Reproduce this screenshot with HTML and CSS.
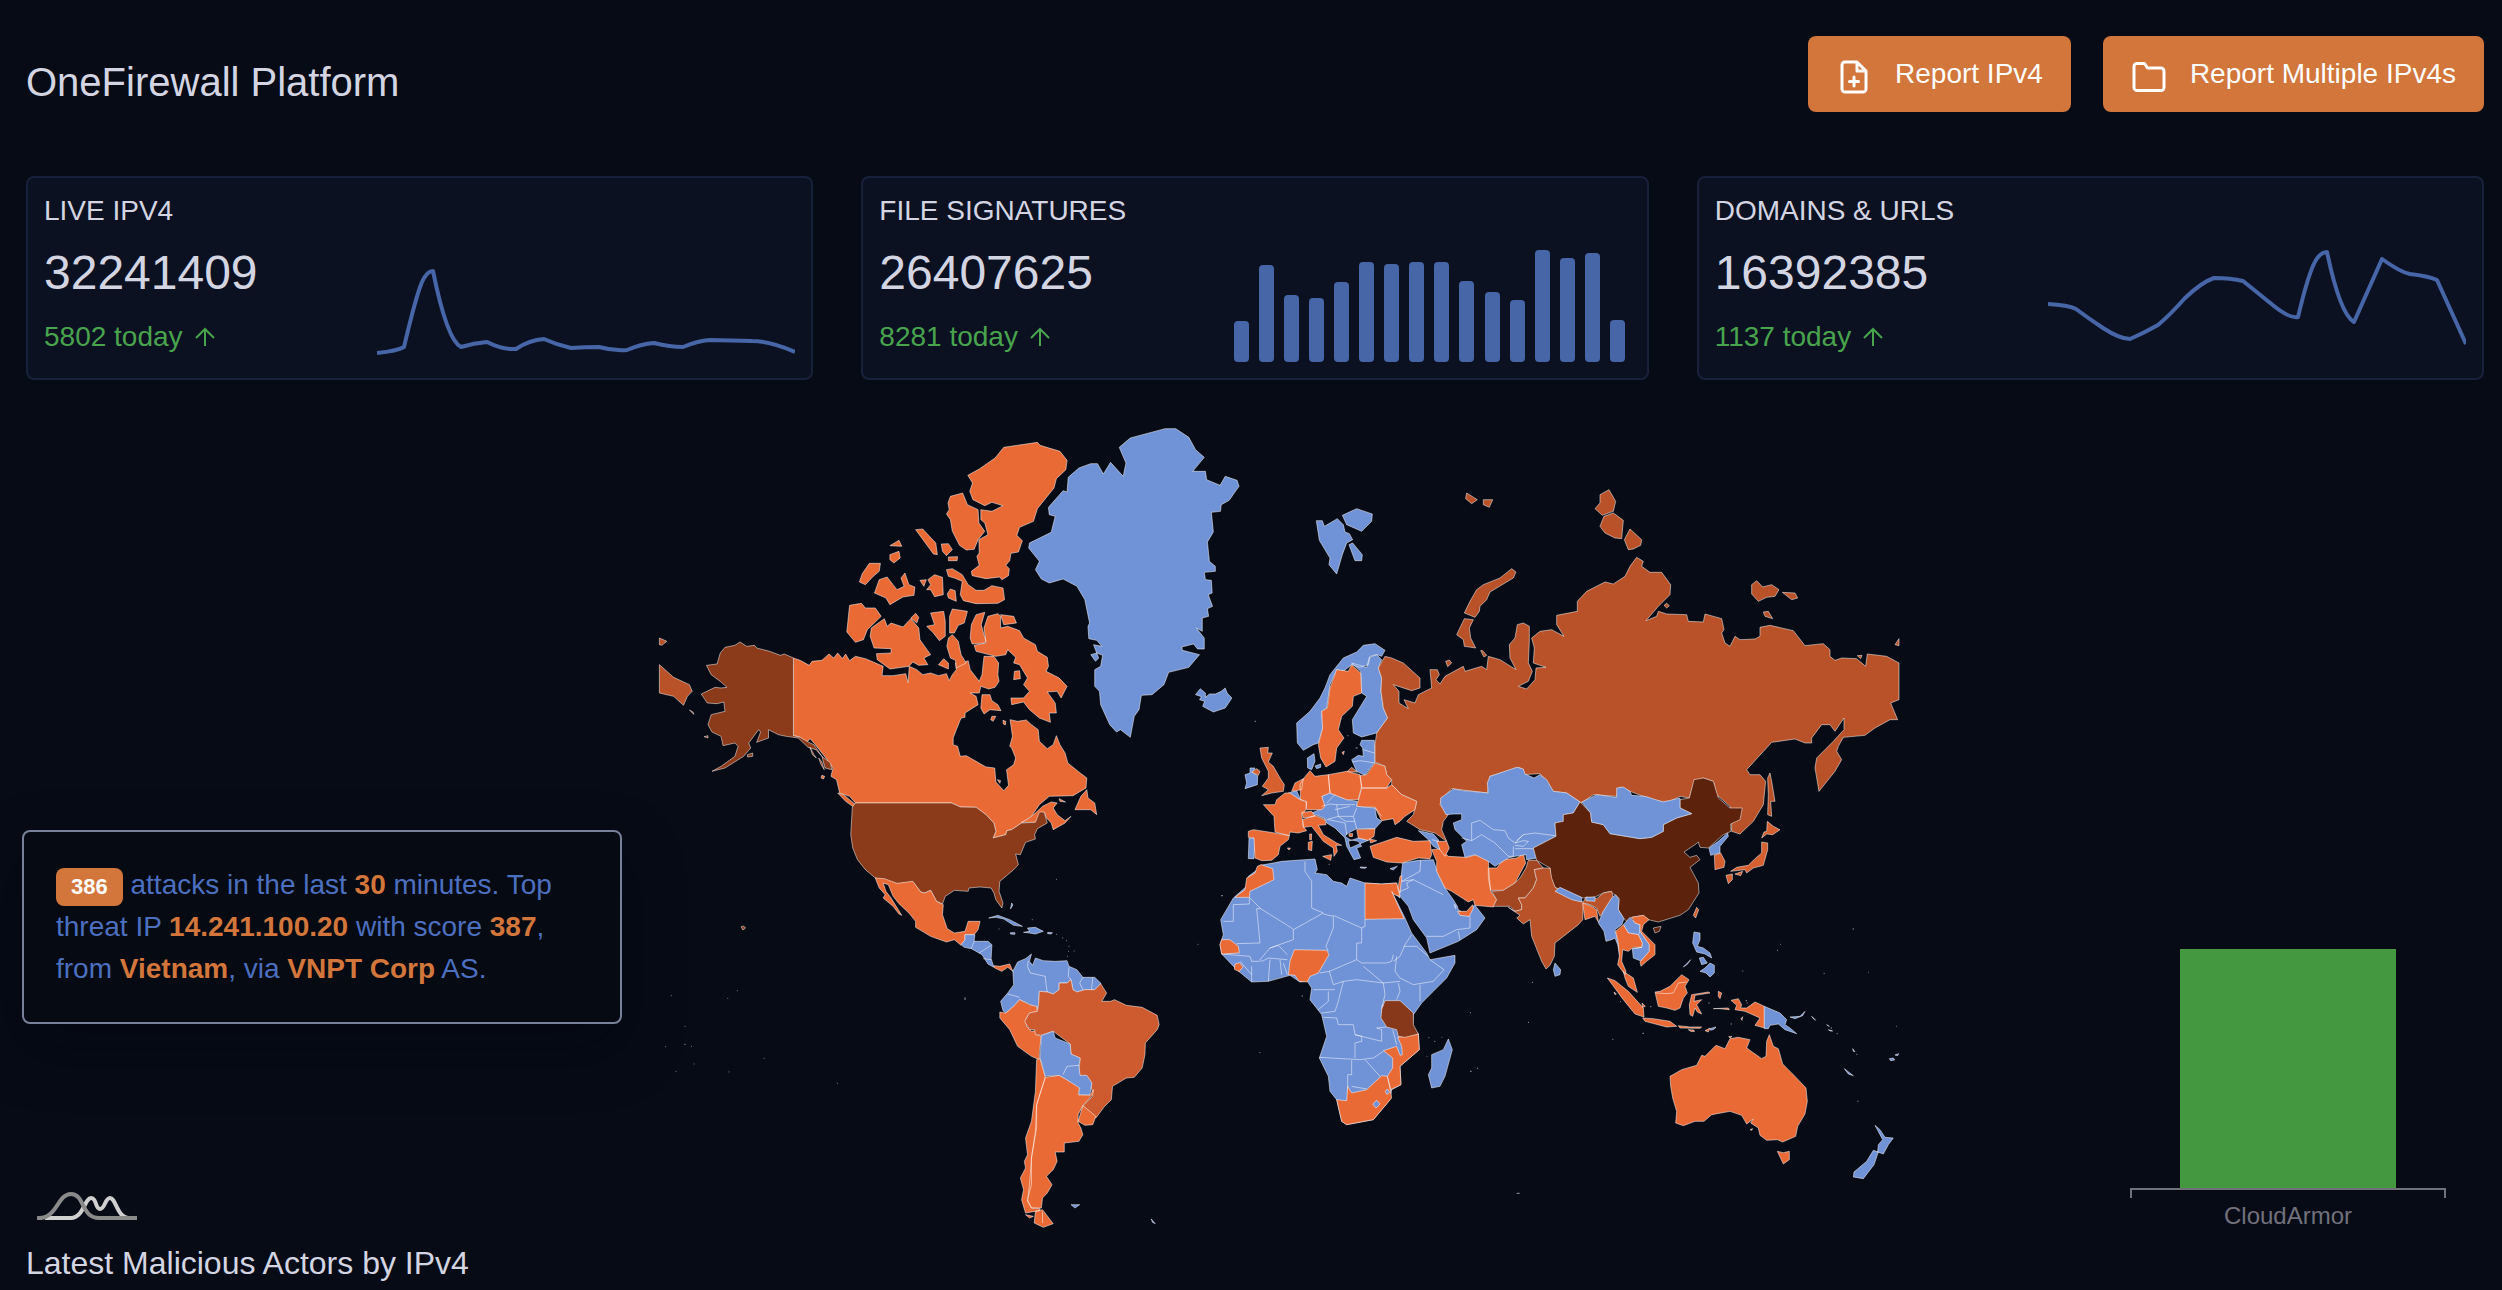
FILE: index.html
```html
<!DOCTYPE html>
<html lang="en">
<head>
<meta charset="utf-8">
<meta name="viewport" content="width=device-width, initial-scale=1">
<title>OneFirewall Platform</title>
<link rel="stylesheet" href="styles.css">
</head>
<body>
<div class="page">
  <header class="header">
    <h1 class="title">OneFirewall Platform</h1>
    <div class="actions">
      <button class="btn" type="button">
        <svg class="btn-icon" viewBox="0 0 24 24" aria-hidden="true"><path d="M14 2H6a2 2 0 0 0-2 2v16a2 2 0 0 0 2 2h12a2 2 0 0 0 2-2V8zM14 2v6h6M12 18v-6M9 15h6"/></svg>
        <span>Report IPv4</span>
      </button>
      <button class="btn" type="button">
        <svg class="btn-icon" viewBox="0 0 24 24" aria-hidden="true"><path d="M22 19a2 2 0 0 1-2 2H4a2 2 0 0 1-2-2V5a2 2 0 0 1 2-2h5l2 3h9a2 2 0 0 1 2 2z"/></svg>
        <span>Report Multiple IPv4s</span>
      </button>
    </div>
  </header>

  <section class="cards">
    <article class="card">
      <div class="card-text">
        <h2 class="card-title">LIVE IPV4</h2>
        <p class="card-value">32241409</p>
        <p class="card-today">5802 today <svg class="arrow" viewBox="0 0 24 24" aria-hidden="true"><path d="M12 21V4M3 13l9-9 9 9"/></svg></p>
      </div>
      <svg class="spark" viewBox="0 0 418 114" aria-hidden="true"><path d="M0 105Q20 103 27 99Q39 48 45 34Q50 23 56 23Q70 92 84 99Q97 95 110 94Q126 102 139 101Q152 92 167 91Q180 97 194 100Q208 99 222 99Q236 103 250 102Q264 96 277 95Q293 99 306 99Q320 93 333 92L375 93Q393 93 418 104"/></svg>
    </article>
    <article class="card">
      <div class="card-text">
        <h2 class="card-title">FILE SIGNATURES</h2>
        <p class="card-value">26407625</p>
        <p class="card-today">8281 today <svg class="arrow" viewBox="0 0 24 24" aria-hidden="true"><path d="M12 21V4M3 13l9-9 9 9"/></svg></p>
      </div>
      <svg class="spark bars" viewBox="0 0 418 114" aria-hidden="true">
        <rect x="21" y="73" width="15" height="41" rx="4"/><rect x="46" y="17" width="15" height="97" rx="4"/><rect x="71" y="47" width="15" height="67" rx="4"/><rect x="96" y="50" width="15" height="64" rx="4"/><rect x="121" y="34" width="15" height="80" rx="4"/><rect x="146" y="14" width="15" height="100" rx="4"/><rect x="171" y="16" width="15" height="98" rx="4"/><rect x="196" y="14" width="15" height="100" rx="4"/><rect x="221" y="14" width="15" height="100" rx="4"/><rect x="246" y="33" width="15" height="81" rx="4"/><rect x="272" y="44" width="15" height="70" rx="4"/><rect x="297" y="52" width="15" height="62" rx="4"/><rect x="322" y="2" width="15" height="112" rx="4"/><rect x="347" y="10" width="15" height="104" rx="4"/><rect x="372" y="5" width="15" height="109" rx="4"/><rect x="397" y="72" width="15" height="42" rx="4"/>
      </svg>
    </article>
    <article class="card">
      <div class="card-text">
        <h2 class="card-title">DOMAINS &amp; URLS</h2>
        <p class="card-value">16392385</p>
        <p class="card-today">1137 today <svg class="arrow" viewBox="0 0 24 24" aria-hidden="true"><path d="M12 21V4M3 13l9-9 9 9"/></svg></p>
      </div>
      <svg class="spark" viewBox="0 0 418 114" aria-hidden="true"><path d="M0 56Q20 57 28 61Q40 70 55 80Q72 91 82 91Q96 85 110 77Q122 67 137 50Q154 34 166 30Q183 30 195 33L221 54Q241 71 250 69Q261 23 268 12Q273 4 279 4Q292 66 306 74L334 11Q352 24 362 26Q380 28 389 32L418 96"/></svg>
    </article>
  </section>

  <section class="stage">
    <div class="side">
      <p class="notice"><span class="badge">386</span> attacks in the last <strong>30</strong> minutes. Top threat IP <strong>14.241.100.20</strong> with score <strong>387</strong>, from <strong>Vietnam</strong>, via <strong>VNPT Corp</strong> AS.</p>
      <a class="logo" href="#" aria-label="Chart library">
        <svg viewBox="0 0 100 28" aria-hidden="true"><path class="logo-light" d="M8 26H34C46 26 48 6 54 6S58 17 63 17S68 6 73 6C79 6 80 26 92 26"/><path class="logo-dark" d="M0 26C20 28 20 2 34 2S44 26 62 26H100"/></svg>
      </a>
    </div>

    <svg class="map" viewBox="654 410 1444 836" role="img" aria-label="World map of attacks by country">
      <!-- North America and Greenland -->
      <g transform="translate(640 410) scale(.39541 .33333)">
        <path class="o" d="M388,750 405,757 428,772 435,760 460,757 478,738 490,750 500,735 512,752 520,738 530,758 545,745 570,752 590,762 615,775 612,803 640,803 672,797 678,824 681,775 700,785 715,800 735,795 755,803 775,797 782,818 790,800 800,785 798,765 808,757 815,765 830,758 835,785 858,820 865,800 870,745 895,745 907,765 905,800 908,820 898,838 882,843 862,835 858,855 835,855 850,865 855,890 835,905 822,915 822,928 812,930 800,965 792,990 792,1010 803,1015 810,1045 825,1043 850,1060 875,1077 897,1080 900,1122 920,1148 932,1132 927,1085 945,1070 950,1050 940,1020 935,1015 942,985 936,935 955,940 977,936 990,950 1007,965 1010,1000 1030,1022 1045,1010 1053,983 1062,1010 1075,1035 1082,1065 1110,1092 1130,1110 1128,1140 1095,1163 1035,1165 1010,1190 990,1225 965,1245 940,1265 928,1268 925,1280 893,1290 900,1270 895,1245 875,1220 850,1198 810,1197 788,1185 545,1185 530,1165 505,1155 497,1115 483,1105 488,1080 470,1050 440,1005 430,992 420,1005 405,987 388,983Z"/>
        <path class="o" d="M965,1243 985,1230 1000,1215 1018,1195 1040,1182 1055,1185 1045,1200 1055,1220 1075,1238 1090,1225 1075,1245 1045,1265 1040,1245 1028,1230 1022,1212 1000,1243ZM1130,1145 1133,1170 1150,1185 1155,1220 1140,1205 1100,1205 1115,1165ZM500,1155 515,1160 545,1190 540,1197 520,1180ZM460,1102 467,1105 464,1113 458,1110ZM1060,1172 1076,1182 1062,1180Z"/>
        <path class="o" d="M920,118 1005,103 1012,112 1062,130 1080,157 1077,185 1053,212 1047,240 1005,302 995,340 960,358 953,382 967,398 957,432 938,436 935,458 925,472 934,482 932,503 915,515 910,507 875,512 840,503 838,490 858,472 852,445 858,435 857,395 880,380 872,345 862,335 862,305 890,310 918,293 890,283 872,293 842,275 834,250 841,225 829,202 858,183 898,150ZM785,265 816,255 828,290 855,305 857,345 872,370 855,395 845,424 825,426 808,412 790,370 785,335 775,318 782,305 779,285ZM697,365 715,363 748,405 752,440 742,438 725,410ZM762,408 780,407 790,425 775,443 765,430ZM780,447 803,446 802,458 780,458ZM632,413 655,397 662,415ZM632,440 655,430 658,450 642,465 632,455ZM580,466 608,466 605,490 590,505 570,530 555,522 562,497ZM605,515 625,507 640,530 650,545 668,535 660,510 670,495 680,530 695,537 693,562 665,567 632,590 622,570 593,555ZM728,515 745,500 765,508 767,560 745,566 735,545 725,545 735,530ZM708,517 724,515 718,535ZM785,543 797,548 800,580 780,570 777,558ZM775,485 790,482 815,500 830,530 850,547 870,547 890,533 918,540 922,575 905,586 850,587 818,578 810,560 815,520 795,510 780,505Z"/>
        <path class="o" d="M530,592 560,586 570,600 595,600 610,625 575,665 565,695 545,703 523,672ZM618,632 625,655 635,645 665,657 685,632 705,660 708,695 735,740 718,750 728,770 705,772 690,762 680,775 632,783 600,755 598,737 635,735 635,722 592,720 582,685 585,660ZM685,630 697,616 705,628 700,645ZM735,615 768,610 772,640 772,685 757,698 742,675 725,655 745,650ZM790,603 828,610 820,645 805,652 795,675 783,675 783,625ZM780,690 790,680 805,700 812,740 825,765 800,780 798,757 785,750 776,715ZM755,770 768,752 780,765 780,783ZM850,620 872,613 863,650 870,680 875,700 870,705 840,708 835,690 838,650ZM880,625 905,617 912,625 912,660 930,655 960,668 970,690 1000,710 1005,730 1030,748 1033,775 1027,790 1060,810 1080,835 1065,870 1055,850 1030,852 1050,885 1053,915 1035,915 1038,943 1010,930 985,905 970,882 940,890 938,870 970,870 985,850 970,830 980,810 960,770 945,765 950,748 930,725 925,740 900,745 850,730 845,712 875,705 870,660ZM912,620 945,625 952,645 920,650ZM865,860 885,860 890,878 905,890 913,908 885,905 870,918 862,900ZM947,790 960,788 962,812 945,815ZM890,925 900,925 893,940 887,935ZM918,937 925,940 924,951 919,948ZM904,1115 912,1118 910,1126Z"/>
        <path class="us" d="M388,750 365,738 355,742 328,730 295,720 290,712 270,715 253,702 240,712 215,718 203,735 195,768 168,772 180,800 205,822 220,838 205,840 190,838 155,858 170,885 195,887 212,882 215,910 180,920 172,950 182,972 205,985 210,1013 240,1005 248,1015 240,1045 205,1075 182,1090 215,1080 262,1045 280,1020 275,1005 300,965 305,972 295,1003 325,990 325,965 350,980 370,985 400,990 425,1018 445,1025 460,1045 468,1080 485,1085 482,1065 460,1045 440,1010 430,1005 405,988 388,983ZM272,1040 285,1035 285,1045 272,1047ZM162,986 172,983 172,990ZM452,1050 460,1062 466,1085 458,1070ZM430,1018 440,1040 446,1050 436,1040Z"/>
        <path class="us" d="M545,1185 788,1185 810,1197 850,1198 875,1220 895,1245 900,1270 893,1290 925,1280 928,1268 940,1265 965,1245 1000,1243 1010,1212 1022,1212 1030,1245 1005,1262 998,1280 1000,1293 975,1303 962,1340 950,1338 957,1370 945,1385 910,1420 908,1450 918,1485 915,1500 900,1475 895,1455 888,1440 860,1437 832,1440 830,1450 795,1447 772,1465 765,1488 750,1480 735,1447 720,1455 710,1452 690,1422 650,1428 595,1410 570,1385 550,1355 538,1320 533,1280 537,1197Z"/>
        <path class="ru" d="M49,770 85,808 125,830 132,850 120,865 110,892 85,865 49,855ZM49,690 68,700 55,712 49,710ZM125,906 134,912 136,919Z"/>
        <path class="b" d="M1212,118 1240,90 1328,62 1355,62 1388,88 1405,125 1427,148 1398,190 1430,190 1433,215 1467,232 1480,205 1510,217 1515,235 1490,277 1470,290 1468,310 1445,313 1450,372 1435,402 1440,460 1455,475 1455,490 1427,493 1430,515 1445,517 1447,555 1437,560 1448,595 1435,602 1438,625 1422,630 1422,670 1407,660 1427,690 1427,723 1410,723 1400,708 1370,717 1372,727 1415,740 1388,778 1337,793 1325,830 1295,860 1268,862 1262,905 1250,925 1240,988 1215,965 1205,972 1188,950 1165,890 1162,850 1150,835 1150,785 1165,775 1170,742 1155,735 1147,710 1168,715 1155,697 1135,692 1133,655 1137,645 1125,575 1105,535 1070,513 1035,525 1015,513 1000,485 1010,460 983,420 985,405 1040,373 1050,325 1035,320 1033,298 1070,248 1080,252 1083,208 1110,180 1140,167 1157,167 1172,198 1190,163 1222,205 1229,165ZM1405,860 1417,842 1430,855 1430,868 1440,858 1455,858 1470,850 1480,840 1485,855 1497,870 1480,900 1450,912 1423,895 1428,880 1415,875 1420,866ZM1140,740 1155,735 1160,750 1152,760Z"/>
      </g>
      <!-- Central and South America -->
      <g transform="translate(640 840) scale(.39541 .33333)">
        <path class="o" d="M595,120 618,122 650,136 690,130 710,162 720,165 735,157 750,190 767,200 765,230 777,272 795,285 822,280 830,250 860,250 855,275 845,290 822,290 822,305 812,322 795,305 775,312 735,295 697,268 697,250 680,225 655,197 640,175 628,140 615,135 622,160 635,180 648,205 662,232 655,228 640,205 615,180 620,170 605,150Z"/>
        <path class="b" d="M812,320 822,305 822,290 847,290 845,310 880,310 890,320 888,362 895,388 880,378 865,350 838,332 820,328ZM882,240 905,232 935,245 967,265 945,262 920,243 900,238ZM980,270 1000,268 1020,280 1000,288 985,285 970,283 985,280ZM937,284 948,284 948,289 937,288ZM1031,283 1043,284 1040,288 1031,287ZM1090,1100 1112,1100 1100,1110ZM1293,1143 1303,1157 1296,1153ZM940,195 943,201 937,213Z"/>
        <path class="b" d="M943,400 955,372 975,362 990,348 985,370 993,382 1000,360 1020,368 1050,370 1080,368 1085,385 1105,395 1120,418 1150,418 1165,435 1165,445 1150,455 1125,455 1105,462 1095,455 1090,425 1080,435 1060,435 1060,455 1045,468 1030,462 1010,460 1008,500 1003,520 985,498 960,485 945,505 925,525 918,518 912,490 930,465 945,440Z"/>
        <path class="line" d="M982,368 980,385 987,405 1025,415 1027,440 1030,462M1085,388 1083,415 1090,425M1120,418 1112,435 1120,455M1145,418 1142,455M930,468 960,478M845,310 838,332M888,322 858,345M868,362 888,365"/>
        <path class="o" d="M895,383 910,385 935,378 943,400 930,388 915,400 897,390ZM910,522 925,525 945,505 960,485 985,500 1003,505 1005,520 985,525 975,545 978,565 990,580 1000,578 1003,590 1015,595 1010,640 1010,665 990,655 955,625 935,575 910,540Z"/>
        <path class="br" d="M1008,500 1010,460 1030,462 1045,468 1060,455 1060,435 1080,435 1090,425 1095,455 1105,462 1125,455 1150,455 1165,437 1180,465 1168,490 1190,490 1200,485 1230,502 1270,508 1308,532 1313,560 1308,575 1278,615 1277,650 1270,690 1250,718 1230,720 1195,745 1192,785 1175,805 1153,840 1120,803 1145,775 1140,735 1110,710 1113,660 1090,650 1088,618 1045,580 1015,592 1000,590 998,575 985,575 973,550 985,525 1005,520Z"/>
        <path class="o" d="M1025,718 1060,712 1075,722 1112,745 1108,770 1138,772 1147,755 1145,770 1120,803 1108,830 1108,855 1115,870 1120,890 1110,910 1073,915 1073,942 1050,942 1055,970 1045,995 1028,1015 1042,1040 1030,1065 1018,1080 1015,1110 990,1110 980,1090 985,1040 990,960 1000,880 1003,800ZM1120,803 1153,835 1145,860 1125,862 1108,850ZM1003,665 1012,662 1025,718 1003,800 1003,870 990,960 990,1040 980,1085 990,1110 1012,1112 1010,1118 975,1125 965,1085 970,1055 962,1020 975,990 972,970 980,950 975,900 990,850 1000,760ZM1000,1120 1018,1115 1045,1157 1020,1168 997,1155ZM975,1130 995,1135 985,1140Z"/>
        <path class="b" d="M1015,592 1045,580 1050,600 1088,618 1090,648 1113,660 1110,685 1113,712 1130,712 1143,735 1138,770 1110,770 1112,750 1075,722 1060,712 1025,715 1012,660Z"/>
        <path class="line" d="M1070,710 1080,685 1110,682M1018,1120V1155"/>
        <path class="us" d="M256,266 262,264 267,270 260,276Z"/>
        <path class="dot" d="M1052,124h2M991,245h2M907,273h2M1052,289h2M1068,300h2M1078,308h2M1084,325h2M1083,340h2M1097,339h2M1080,355h2M822,478v8M245,458h2M221,481h2M113,565h2M112,619h3M129,625h2M136,678h2M90,700h2M313,661h2M224,702h2M498,736h2M1410,319h2M1470,173h3M78,473h2M64,626h2"/>
      </g>
      <!-- Africa and the Middle East -->
      <g transform="translate(1200 830) scale(.33333)">
        <path class="b" d="M180,112 220,105 245,100 345,93 352,125 345,135 380,140 400,160 425,165 440,175 450,150 495,165 545,168 590,165 600,210 575,190 615,270 635,315 680,375 690,395 765,382 765,405 740,450 700,490 665,525 640,560 638,600 655,618 658,665 600,715 603,770 575,785 570,815 520,875 440,890 425,880 410,815 390,790 385,745 358,690 380,625 365,560 330,515 335,480 322,460 300,462 270,442 205,460 155,462 110,425 65,378 60,350 70,320 62,275 100,210 140,175 145,145 172,125ZM745,633 757,665 735,745 720,775 695,780 685,740 695,720 695,680 730,665Z"/>
        <path class="b" d="M608,105 655,97 700,95 715,140 735,180 760,215 772,235 775,245 805,265 810,240 825,232 855,270 830,305 775,340 690,375 680,330 640,275 625,235 600,205 598,190ZM480,117 500,118 495,121 482,120ZM570,122 592,115 580,126Z"/>
        <path class="line" d="M148,208 182,242 275,300 280,305 370,255 335,240 335,160 315,130 315,100M70,280 100,280 100,230 148,228V210M182,242H170L180,345 110,347M280,305 280,335 210,360 180,395 187,400 205,390 262,395M210,360 235,352 262,380M370,258 400,265 400,300 378,355 385,370M400,262 485,300 485,345 470,345 470,395 400,425 388,430 360,435M495,274V295L485,300M470,395 485,405 500,405 560,405 575,400 580,380M580,400 600,385 615,350 635,320M612,355 650,355 685,385M690,395 732,425 700,460 640,470 600,450 585,430 590,385M490,415 550,465 600,460M388,430 400,470 430,460 470,455 550,465 555,500 545,540 545,570M660,470V520M595,465 600,490 590,515M430,460 415,520 405,550 365,555M340,485H405M385,490V520L355,545M370,568 410,570 415,590 460,590 465,620 485,625V640L465,645V690M358,688 480,695 520,690 550,670M465,620 545,640 545,605 530,600 560,597M455,697V740H443V815M495,695 540,745M578,605 590,650M155,462V415M205,460 210,395M245,440 240,395M262,440 250,405M65,378 150,385 155,400 180,400M120,400 155,440M455,775 500,783M680,325 730,325 770,305 810,300V265M605,160 640,155 730,200M662,97 660,130 605,160M600,190 625,180 620,165 640,155M775,310 780,335M543,535 555,530"/>
        <path class="o" d="M172,115 183,110 218,122 222,155 150,190 148,208 105,208 135,185 140,150 165,135ZM495,165 545,168 590,165 600,205 583,200 575,190 612,272 495,274ZM65,335 90,335 115,355 118,375 65,378 60,350ZM105,408 118,404 129,416 118,431 103,424ZM283,365 380,367 387,380 355,435 330,445 322,462 297,460 285,442 265,440 270,400ZM593,628 655,618 658,665 600,715 603,770 572,785 562,745 578,720 578,690 550,668 590,655 600,682 607,680 605,655ZM410,815 440,818 443,775 455,795 500,785 545,743 562,745 570,780 575,810 520,875 440,890 425,880ZM773,250 800,250 818,230 820,240 808,265 780,262ZM600,145 606,143 600,195 594,180Z"/>
        <path class="o" d="M695,65 720,62 745,85 800,88 830,80 865,95 868,150 872,190 890,215 880,237 825,232 820,215 805,222 755,190 735,180 710,130 710,100ZM865,120 890,120 910,95 950,90 970,78 977,105 945,165 910,187 872,187 865,150Z"/>
        <path class="tz" d="M555,518 600,518 640,555 640,590 655,618 615,628 595,625 590,605 560,597 543,570 545,545Z"/>
        <path class="b" d="M518,828 530,817 540,828 528,840ZM556,790 562,783 569,793 560,799ZM762,230 768,232 767,242Z"/>
        <path class="dot" d="M64,203h4M305,504h4M178,674h3M685,629h3M703,640h3M725,628h2M810,730h5M831,721h3M810,554h3M985,583h2M997,463h2M680,685h2M386,109h3"/>
      </g>
      <!-- Europe and Russia -->
      <g transform="translate(1200 410) scale(.33333)">
        <path class="b" d="M349,338 367,338 373,355 412,332 430,350 435,372 448,377 458,395 440,405 427,440 410,498 387,470 390,450 358,397ZM427,322 470,302 517,318 515,340 485,370 440,350ZM447,410 458,405 487,440 485,458 465,458Z"/>
        <path class="ru" d="M800,255 832,275 815,287 797,272ZM850,275 878,275 868,298 850,290ZM793,615 810,580 830,545 850,530 900,510 935,482 948,492 940,510 870,552 860,575 840,595 838,610 825,628ZM793,632 820,635 808,660 812,690 827,720 793,715 790,695 770,680Z"/>
        <path class="b" d="M290,945 330,910 360,870 375,840 390,800 430,750 470,732 490,712 525,707 555,727 545,745 530,740 510,745 505,770 480,778 455,770 430,790 410,785 390,830 380,900 365,910 368,960 355,1005 340,1010 310,1027 292,1005ZM455,765 500,778 508,748 530,740 545,755 535,780 545,810 543,850 550,900 563,930 530,975 485,987 460,975 457,935 500,865 485,855 482,790ZM485,997 523,997 525,1062 495,1102 470,1090 455,1055 475,1042 490,1045 488,1020 480,1010ZM322,1050 342,1037 345,1060 335,1085 323,1080ZM345,1074 362,1068 362,1078 350,1082ZM150,1080 165,1080 158,1095 173,1103 172,1130 135,1142 140,1125 135,1100 150,1095Z"/>
        <path class="ru" d="M555,745 575,750 610,765 660,810 660,840 635,848 580,830 597,850 597,885 625,902 612,875 645,885 655,860 695,840 690,785 712,785 718,800 708,815 720,828 735,805 790,775 795,790 845,775 860,785 865,745 900,755 948,785 930,750 928,710 945,690 952,650 970,645 988,655 988,700 985,765 997,790 985,820 955,835 980,843 1005,815 1008,780 1038,778 1000,765 1003,720 995,690 1020,670 1055,665 1092,685 1070,650 1070,622 1132,610 1132,580 1160,550 1215,522 1240,528 1275,505 1290,475 1310,448 1330,460 1325,475 1350,493 1385,493 1412,530 1410,560 1375,595 1338,638 1370,625 1375,610 1400,618 1460,620 1465,640 1510,642 1515,618 1565,632 1572,665 1565,675 1575,705 1590,715 1605,685 1620,695 1665,693 1680,685 1680,658 1710,652 1780,668 1815,713 1870,707 1890,725 1890,745 1905,757 1925,750 1970,752 1997,775 2002,738 2060,745 2097,765 2097,875 2072,885 2093,935 2070,935 2025,960 1995,982 1930,988 1915,1015 1910,1030 1925,1055 1905,1090 1857,1150 1845,1080 1850,1050 1900,1000 1932,965 1932,930 1905,970 1890,950 1865,950 1835,990 1835,1005 1815,1005 1785,993 1715,1003 1640,1085 1650,1100 1680,1100 1697,1120 1690,1190 1660,1240 1620,1278 1595,1270 1595,1245 1590,1195 1550,1160 1540,1120 1510,1110 1480,1130 1468,1170 1440,1165 1410,1180 1370,1180 1330,1165 1290,1150 1260,1137 1250,1165 1180,1160 1145,1185 1100,1155 1060,1150 1020,1097 970,1100 960,1078 870,1105 862,1155 780,1145 755,1142 725,1175 720,1190 745,1220 730,1240 725,1265 740,1300 705,1275 660,1265 620,1240 640,1220 650,1180 605,1160 575,1130 575,1115 560,1100 555,1075 525,1062 525,1010 530,975 563,930 550,900 543,850 545,810 535,780ZM440,1092 455,1078 472,1092Z"/>
        <path class="o" d="M455,770 482,795 485,855 460,865 457,895 425,925 415,965 432,990 410,1020 405,1060 378,1077 362,1050 355,1010 368,960 365,910 382,900 390,840 410,785 445,790ZM426,1033 433,1030 430,1040Z"/>
        <path class="uk" d="M180,1020 205,1018 203,1035 217,1035 205,1062 220,1075 240,1110 253,1130 250,1150 215,1155 185,1163 205,1145 187,1135 205,1110 205,1090 185,1050ZM155,1092 170,1082 180,1090 175,1102Z"/>
        <path class="b" d="M365,1165 388,1155 440,1175 472,1180 470,1195 525,1200 530,1230 545,1240 525,1262 470,1262 445,1275 435,1285 450,1295 475,1300 485,1315 470,1320 482,1350 462,1355 440,1315 435,1290 405,1260 380,1245 375,1232 335,1215 370,1200ZM147,1290 165,1290 162,1352 145,1352ZM265,1155 290,1148 302,1175 285,1170ZM655,1268 700,1278 715,1295 720,1325 700,1315 685,1295ZM505,1297 475,1290 445,1300 450,1320Z"/>
        <path class="o" d="M480,1103 500,1100 525,1065 555,1075 560,1100 575,1115 560,1140 485,1140ZM485,1140 560,1140 575,1130 605,1160 650,1180 645,1205 615,1225 600,1240 585,1250 580,1232 545,1238 525,1198 470,1195ZM385,1100 440,1090 480,1100 485,1135 475,1175 440,1175 390,1155ZM330,1088 345,1105 385,1100 390,1155 365,1165 375,1195 365,1205 320,1205 318,1180 302,1175 300,1130 310,1112ZM275,1150 285,1125 310,1112 305,1145ZM190,1190 225,1190 230,1175 255,1155 270,1155 300,1175 320,1182 318,1205 305,1220 310,1255 320,1268 295,1275 270,1272 268,1283 225,1272 222,1225ZM305,1213 335,1210 345,1225 310,1230ZM145,1270 160,1265 225,1275 268,1283 265,1295 240,1315 235,1340 215,1357 185,1358 165,1350 162,1290 145,1288ZM308,1235 345,1222 375,1235 378,1250 355,1252 370,1280 410,1305 425,1312 408,1312 412,1330 402,1345 400,1320 370,1300 335,1255 310,1258ZM368,1345 395,1340 392,1357ZM325,1303 337,1300 335,1328 325,1325ZM329,1278 335,1278 334,1296 329,1295ZM262,1320 271,1320 267,1326Z"/>
        <path class="o" d="M470,1265 525,1262 522,1285 505,1297 475,1290ZM447,1277 458,1277 457,1286 447,1285ZM510,1315 540,1305 590,1288 640,1300 690,1298 695,1340 690,1352 655,1350 605,1365 560,1362 520,1348ZM508,1292 530,1298 512,1305ZM710,1300 740,1300 748,1320 735,1345 720,1325Z"/>
        <path class="line" d="M490,1025 523,1035M457,1062 480,1058 525,1065M365,1195 390,1188 410,1190 465,1190M405,1160 380,1185M410,1190 415,1225 380,1235M415,1225 460,1225 470,1200M460,1225 470,1262M385,1235 435,1245 440,1280M415,1225 437,1240 465,1240M405,1205 450,1195M525,1198 545,1225M695,1295 715,1300"/>
        <path class="dot" d="M164,940h4M442,983h3M467,1020h6"/>
      </g>
      <!-- Central and East Asia, Arctic islands -->
      <g transform="translate(1400 470) scale(.33333)">
        <path class="ru" d="M600,80 627,65 647,100 640,130 607,142 585,122 600,105ZM600,175 612,145 640,135 670,157 665,212 645,210 615,195ZM690,183 725,215 722,232 700,243 685,245 673,215ZM1055,350 1070,338 1088,357 1115,350 1137,365 1125,385 1100,388 1075,400 1055,378ZM1147,373 1185,375 1193,390 1175,395ZM1090,432 1105,430 1118,452 1095,445ZM1497,512 1497,533 1485,530ZM1110,915 1115,940 1125,1000 1112,1000 1115,1045 1103,1040 1105,980 1103,930ZM792,412 800,406 808,413 800,420ZM137,580 148,576 155,585 143,596ZM242,548 247,547 260,562 252,567ZM1372,563 1386,562 1382,572Z"/>
        <path class="b" d="M122,990 160,963 190,968 265,975 262,945 270,925 350,898 370,903 375,918 402,930 420,920 440,935 460,970 500,975 540,1002 520,1035 490,1040 490,1060 465,1065 468,1105 400,1140 412,1170 380,1175 378,1160 345,1165 325,1170 285,1195 265,1180 225,1160 195,1168 185,1130 200,1120 165,1085 160,1065 185,1055 185,1038 160,1038 138,1040 122,1010Z"/>
        <path class="line" d="M215,1118V1065L240,1057 280,1085 315,1088 325,1110 345,1125 370,1100 405,1095 465,1103M185,1110 215,1118 245,1100 285,1125 325,1165 340,1165 340,1135M345,1125 370,1118 385,1120 370,1135 345,1132M345,1142 400,1142M370,1100 350,1118"/>
        <path class="cn" d="M540,1002 572,1035 575,1062 610,1070 630,1097 720,1112 755,1108 790,1090 790,1070 830,1050 875,1037 840,1020 840,995 868,990 882,935 910,930 940,940 955,990 990,1020 1027,1020 1020,1055 992,1068 993,1090 970,1100 925,1140 900,1138 895,1122 885,1130 852,1152 870,1168 890,1162 900,1175 870,1198 895,1245 897,1275 865,1325 840,1342 775,1362 745,1355 730,1342 695,1348 685,1365 670,1350 655,1325 657,1290 630,1270 610,1275 585,1287 550,1290 515,1280 465,1258 452,1230 450,1200 410,1177 400,1140 468,1105 465,1065 490,1060 490,1040 520,1035ZM760,1380 783,1375 778,1390 765,1395Z"/>
        <path class="b" d="M545,1002 590,980 650,988 650,960 670,957 690,970 695,982 735,985 790,1002 840,990 840,1020 875,1037 830,1050 790,1070 790,1090 755,1108 720,1112 630,1097 610,1070 575,1062 572,1035Z"/>
        <path class="jp" d="M1102,1060 1120,1075 1140,1085 1118,1100 1100,1098 1085,1110 1092,1092 1100,1090Z"/>
      </g>
      <!-- South and South-East Asia, Oceania -->
      <g transform="translate(1500 830) scale(.33333)">
        <path class="pk" d="M-20,235 30,235 45,250 65,245 65,230 55,210 75,210 100,180 110,155 103,125 130,120 110,97 85,97 78,120 60,150 45,165 10,187 -25,190 -10,215Z"/>
        <path class="ru" d="M25,238 45,250 65,245 65,230 55,210 75,210 100,180 110,155 103,125 130,120 150,120 155,150 165,178 215,210 250,222 258,207 290,212 310,195 335,190 340,210 310,250 300,265 290,240 270,230 250,225 248,275 235,290 165,345 163,385 150,412 138,423 125,400 95,325 90,275 70,288 50,270 60,262Z"/>
        <path class="b" d="M165,190 180,178 245,208 245,222 215,215ZM258,208 285,207 285,220 258,218ZM165,405 182,425 180,440 165,445 160,425ZM295,285 310,250 335,210 347,200 357,215 355,245 372,272 365,290 345,305 360,365 362,400 353,350 345,330 335,335 318,340 312,310ZM370,290 390,268 405,285 420,290 420,310 448,350 448,370 430,390 425,400 400,390 397,362 425,358 427,345 415,320 385,315ZM627,60 655,40 683,15 685,25 660,55 660,75 632,82Z"/>
        <path class="o" d="M248,225 275,235 290,245 295,282 285,265 255,275ZM347,310 370,290 385,315 415,320 427,345 425,358 400,358 385,370 368,365 365,400 378,430 375,440 353,410 358,385 355,345ZM395,268 430,262 447,275 430,290 425,310 465,350 465,380 440,400 423,415 420,402 448,370 448,350 420,310 420,290 405,285ZM370,430 400,450 412,493 385,475 375,450ZM322,450 345,458 385,490 430,540 432,567 405,558 370,515ZM428,570 460,572 510,580 530,595 500,597 435,580ZM535,593 570,597 605,597 600,601 540,600ZM565,605 582,606 583,611 572,610ZM465,492 480,490 510,475 545,440 567,455 555,475 562,495 550,510 540,540 525,547 500,540 475,535ZM575,500 625,492 630,495 585,502 582,520 605,515 590,530 605,558 592,552 585,540 578,565 570,560 568,530ZM655,490 665,495 660,512 655,505ZM640,542 685,540 688,545 660,542ZM615,608 630,600 625,612ZM693,517 715,512 725,530 722,540 740,540 765,522 793,535 793,600 765,592 780,570 735,550 705,545 710,532ZM426,525 436,535 428,538ZM342,492 349,498 345,500ZM723,572 728,566 726,577Z"/>
        <path class="b" d="M793,535 840,555 860,575 855,590 870,600 890,617 855,605 835,588 810,592 805,602 793,602ZM870,567 900,565 915,550 908,563 885,572ZM935,565 947,577 940,572ZM980,590 988,595 984,593ZM985,605 998,609 990,609ZM1033,722 1060,743 1045,738ZM1168,692 1180,690 1184,696 1172,698ZM1185,681 1196,677 1193,683ZM1058,662 1065,671 1060,670ZM630,602 648,597 642,604 632,607ZM582,312 600,315 600,335 592,355 610,360 630,375 635,390 615,378 590,372 578,345ZM600,430 615,420 630,405 643,412 643,435 630,447 618,435ZM598,390 610,388 622,405 605,410ZM550,417 572,395 562,409ZM1125,892 1140,905 1155,928 1180,930 1165,950 1150,978 1133,972 1135,950 1148,935ZM1120,967 1135,972 1122,1010 1090,1052 1060,1047 1062,1032 1100,1000Z"/>
        <path class="jp" d="M785,42 803,45 803,65 790,112 760,120 740,135 735,125 692,130 710,118 745,112 765,92 785,75ZM678,142 697,138 697,155 685,167ZM705,138 728,130 722,143ZM643,82 662,75 675,100 672,118 645,125ZM580,262 590,238 596,245 587,270Z"/>
        <path class="o" d="M510,745 545,725 590,712 605,682 615,685 648,652 675,662 690,632 715,628 750,635 740,660 785,692 798,685 800,640 808,620 820,655 835,662 848,708 880,740 918,780 922,820 915,858 893,895 887,925 848,942 832,935 800,937 780,922 775,900 752,885 760,873 740,888 725,862 690,850 635,860 612,880 585,880 550,893 527,885 530,850 518,810 512,775ZM832,970 850,974 868,970 868,995 850,1008ZM750,905 758,902 755,907ZM686,626 696,625 690,630Z"/>
        <path class="line" d="M467,495 500,497 520,495 535,465 560,462M397,362 425,358M420,310 415,320"/>
        <path class="dot" d="M1058,303h4M831,367h3M841,349h2M727,429h3M971,436h3M1105,433h2M85,583h2M337,634h3M427,616h5M97,463h2M1189,595h2M1072,820h3M994,598v4M1010,617h3M1069,679h3M50,1096h9M625,525h4M450,536h4M737,518h4M740,525h3M692,588h4M360,521h3"/>
      </g>
    </svg>

    <figure class="chart">
      <div class="plot"><div class="bar"></div></div>
      <div class="axis"></div>
      <figcaption class="axis-label">CloudArmor</figcaption>
    </figure>
  </section>

  <h2 class="section-title">Latest Malicious Actors by IPv4</h2>
</div>
</body>
</html>
```
FILE: styles.css
```css
* {
  box-sizing: border-box;
}

body {
  margin: 0;
  background: #060b16;
  color: #d3d6e2;
  font-family: "Liberation Sans", Arial, Helvetica, sans-serif;
  font-size: 28px;
  line-height: 34px;
}

h1,
h2,
p,
figure {
  margin: 0;
  font-weight: 400;
}

.page {
  padding: 36px 18px 0 26px;
}

.header {
  display: flex;
  align-items: center;
  justify-content: space-between;
  margin-bottom: 64px;
}

.title {
  padding-top: 16px;
  font-size: 40px;
  line-height: 48px;
}

.actions {
  display: flex;
  gap: 32px;
}

.btn {
  display: flex;
  align-items: center;
  gap: 23px;
  height: 76px;
  padding: 0 28px;
  border: 0;
  border-radius: 8px;
  background: #d2763b;
  color: #fff;
  font: inherit;
  cursor: pointer;
}

.btn-icon {
  width: 36px;
  height: 36px;
  margin-top: 6px;
  fill: none;
  stroke: currentColor;
  stroke-width: 2;
  stroke-linecap: round;
  stroke-linejoin: round;
}

.cards {
  display: grid;
  grid-template-columns: repeat(3, minmax(0, 1fr));
  gap: 48px;
}

.card {
  display: flex;
  align-items: flex-end;
  justify-content: space-between;
  padding: 16px;
  border: 2px solid #19213a;
  border-radius: 8px;
  background: #0c1122;
}

.card-text {
  padding-bottom: 8px;
}

.card-title {
  font-size: 28px;
}

.card-value {
  margin: 16px 0 18px;
  font-size: 48px;
  line-height: 58px;
}

.card-today {
  display: flex;
  align-items: center;
  gap: 10px;
  color: #48a44d;
}

.arrow {
  width: 24px;
  height: 24px;
  fill: none;
  stroke: currentColor;
  stroke-width: 2;
}

.spark {
  width: 418px;
  height: 114px;
  fill: none;
  stroke: #4766a8;
  stroke-width: 4;
  stroke-linejoin: round;
}

.bars {
  fill: #4766a8;
  stroke: none;
}

.stage {
  display: grid;
  grid-template-columns: 600px minmax(0, 1fr) 316px;
  column-gap: 32px;
  align-items: end;
  margin: 28px 38px 0 -4px;
}

.side {
  display: flex;
  flex-direction: column;
  gap: 168px;
  padding-bottom: 24px;
}

.notice {
  padding: 32px;
  border: 2px solid #77819a;
  border-radius: 8px;
  background: #050a13;
  box-shadow: 0 24px 60px rgba(4, 4, 16, 0.4);
  color: #4c70c0;
  line-height: 42px;
}

.notice strong {
  color: #d2763b;
}

.badge {
  display: inline-block;
  padding: 0 15px;
  border-radius: 8px;
  background: #d2763b;
  color: #fff;
  font-size: 22px;
  font-weight: 700;
  line-height: 38px;
  vertical-align: middle;
}

.logo {
  display: block;
  width: 100px;
  height: 28px;
  margin-left: 15px;
}

.logo svg {
  display: block;
  fill: none;
  stroke-width: 4;
}

.logo-light {
  stroke: #d0d0d0;
}

.logo-dark {
  stroke: #8a8a8a;
}

.map {
  display: block;
  width: 100%;
}

.map path {
  stroke: rgba(255, 255, 255, 0.5);
  stroke-width: 1;
  stroke-linejoin: round;
  vector-effect: non-scaling-stroke;
}

.map .o { fill: #ea6a36; }
.map .b { fill: #7092d6; }
.map .us { fill: #8b3a1a; }
.map .tz { fill: #87381a; }
.map .ru { fill: #b95228; }
.map .cn { fill: #5c220c; }
.map .br { fill: #cd5b2f; }
.map .pk { fill: #a34622; }
.map .jp,
.map .uk { fill: #d66030; }

.map .line,
.map .dot {
  fill: none;
}

.map .dot {
  stroke: #8f97a8;
}

.chart {
  padding-bottom: 12px;
}

.plot {
  display: flex;
  justify-content: center;
}

.bar {
  width: 216px;
  height: 239px;
  background: #449940;
}

.axis {
  height: 10px;
  border: 2px solid #71717c;
  border-bottom: 0;
}

.axis-label {
  padding-top: 2px;
  color: #71717c;
  font-size: 24px;
  line-height: 32px;
  text-align: center;
}

.section-title {
  font-size: 32px;
  line-height: 38px;
}
```
